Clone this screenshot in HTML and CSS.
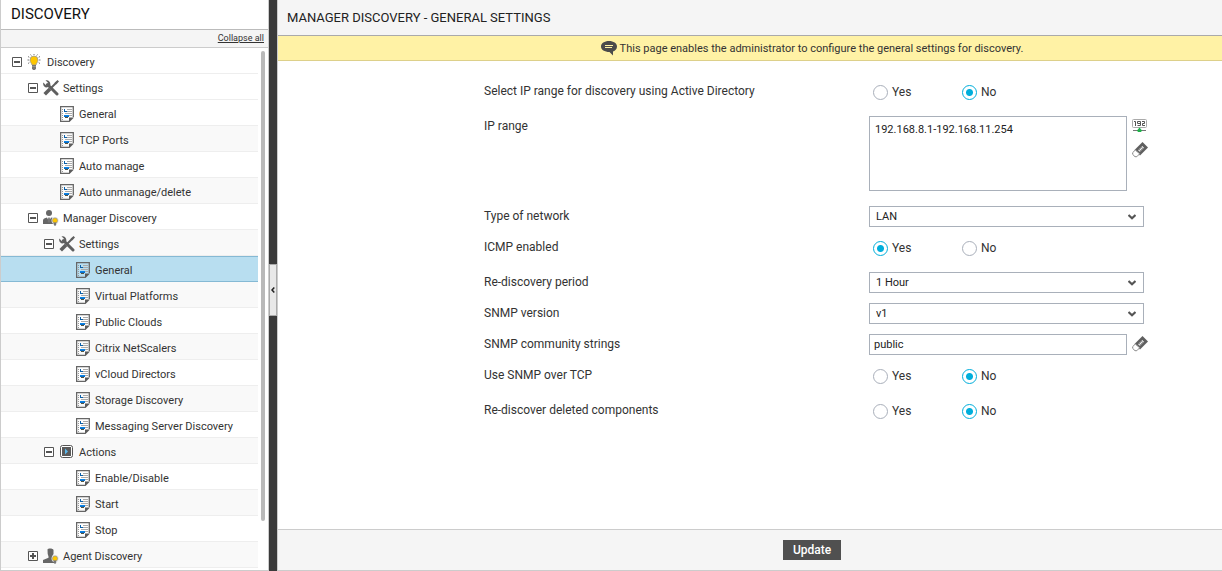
FILE: index.html
```html
<!DOCTYPE html>
<html lang="en">
<head>
    <meta charset="UTF-8">
    <meta name="viewport" content="width=device-width, initial-scale=1.0">
    <title>Manager Discovery - General Settings</title>
    <link rel="stylesheet" href="styles.css">
</head>
<body>
    <svg class="sprite" aria-hidden="true">
        <symbol id="minus" viewBox="0 0 10 10">
            <path d="M.5.5h9v9h-9z" fill="#fff" stroke="#555"/>
            <path d="M2 4h6v2H2z" fill="#555"/>
        </symbol>
        <symbol id="plus" viewBox="0 0 10 10">
            <path d="M.5.5h9v9h-9z" fill="#fff" stroke="#555"/>
            <path d="M2 4h6v2H2zM4 2h2v6H4z" fill="#555"/>
        </symbol>
        <symbol id="bulb" viewBox="0 0 16 16">
            <path d="M7 2a4 4 0 0 0-4 4c0 2 1.500 3 2 5h4c.5-2 2-3 2-5a4 4 0 0 0-4-4z" fill="#fdc600" stroke="#999" stroke-width=".8"/>
            <path d="M5 11h4v3.500L8 16H6l-1-1.500z" fill="#777"/>
            <path d="M5 12.500h4" stroke="#aaa" stroke-width=".6"/>
            <path d="M7 0v1M3.500.5l.8 1M10.500.5l-.8 1M1 2.500l1.300.8M13 2.500l-1.300.8M.5 6h1.500M13.500 6H12M1 9.500l1.300-.8M13 9.500l-1.300-.8" stroke="#777"/>
        </symbol>
        <symbol id="tools" viewBox="0 0 16 16">
            <path d="M4.500 4.500L14 14" stroke="#5f5f5f" stroke-width="3" stroke-linecap="round" fill="none"/>
            <path d="M2.500.3L5.200 3 4.800 4.800 3 5.300.3 2.600C-.4 5.300 1.500 8 4.600 7.300L7.300 5C7.800 2 5.500-.5 2.500.3z" fill="#5f5f5f"/>
            <path d="M1.700 14.300L7 9" stroke="#5f5f5f" stroke-width="3.600"/>
            <path d="M7 9L14 2" stroke="#5f5f5f" stroke-width="2"/>
            <path d="M11.500 3L14.500 0 16 1.500 13 4.500z" fill="#5f5f5f"/>
        </symbol>
        <symbol id="page" viewBox="0 0 16 16">
            <path d="M13.300 11V.6H.6v14.800H9" fill="none" stroke="#666" stroke-width="1.300"/>
            <path d="M9 11.500h5L9.500 16H9z" fill="#5c5c5c"/>
            <path d="M2 3.500h1M2 5.500h1M2 7.500h1M2 9.500h1M2 11.500h1M2 13.500h1" stroke="#999"/>
            <path d="M7 3.500h5M7 5.500h5M5 7.500h7M9 9.500h3" stroke="#aaa"/>
            <path d="M4 3h1v2h2v1H4z" fill="#0b5fa8"/>
            <path d="M4 9h5v1H4z" fill="#0a84e8"/>
            <path d="M4 10h5v1H4z" fill="#0a6cc4"/>
            <path d="M5 11h3v1H5z" fill="#555540"/>
        </symbol>
        <symbol id="manager" viewBox="0 0 16 16">
            <circle cx="6" cy="3" r="3" fill="#666"/>
            <path d="M0 14v-3.500C0 8.500 2 8 4 7.500l2 4 2-4c1.500.3 3 .7 3.500 2V14z" fill="#666"/>
            <path d="M5.300 7.500h1.400l.6 4L6 13l-1.300-1.500z" fill="#777"/>
            <circle cx="12" cy="10.500" r="3.500" fill="#ddd"/>
            <circle cx="12" cy="10.500" r="2.500" fill="#fdc600" stroke="#888" stroke-width=".5"/>
            <path d="M10.800 12.500h2.400V15L12 16l-1.200-1z" fill="#777"/>
        </symbol>
        <symbol id="agent" viewBox="0 0 16 16">
            <path d="M4.500 1.500C5 0 10 0 10.500 2v4L9 8.500v1.200l3.500 1.800V15H0v-3l5.500-2.300V8.500L4.700 6z" fill="#666"/>
            <circle cx="12" cy="10.500" r="3.500" fill="#ddd"/>
            <circle cx="12" cy="10.500" r="2.500" fill="#fdc600" stroke="#888" stroke-width=".5"/>
            <path d="M10.800 12.500h2.400V15L12 16l-1.200-1z" fill="#777"/>
        </symbol>
        <symbol id="action" viewBox="0 0 16 16">
            <rect x="1.500" y="1.500" width="12" height="12" rx="2" fill="#fff" stroke="#555"/>
            <path d="M3 3h9v9H3z" fill="#5a5a5a"/>
            <path d="M6 4.500l3 3-3 3z" fill="#5bb8ec"/>
        </symbol>
        <symbol id="eraser" viewBox="0 0 16 16">
            <path d="M10.500 0L16 5.500 8 13.500 2.500 8z" fill="#5f5f5f"/>
            <path d="M3.300 8L.7 10.600v1.800L3 14.700h1.800l2.900-2.900z" fill="#fff" stroke="#888"/>
            <path d="M7 9l4.500-4.500" stroke="#fff" stroke-width="2.400" stroke-dasharray="1 .6"/>
        </symbol>
        <symbol id="chevron" viewBox="0 0 8 6">
            <path d="M.5 1L4 4.200 7.500 1" fill="none" stroke="#555" stroke-width="2.200"/>
        </symbol>
    </svg>

    <aside class="sidebar">
        <h2>DISCOVERY</h2>
        <div class="collapse"><a href="#">Collapse all</a></div>
        <ul class="tree">
            <li><svg class="toggle"><use href="#minus"/></svg><svg class="icon"><use href="#bulb"/></svg><span>Discovery</span></li>
            <li class="level1"><svg class="toggle"><use href="#minus"/></svg><svg class="icon"><use href="#tools"/></svg><span>Settings</span></li>
            <li class="leaf2"><svg class="icon"><use href="#page"/></svg><a href="#">General</a></li>
            <li class="leaf2"><svg class="icon"><use href="#page"/></svg><a href="#">TCP Ports</a></li>
            <li class="leaf2"><svg class="icon"><use href="#page"/></svg><a href="#">Auto manage</a></li>
            <li class="leaf2"><svg class="icon"><use href="#page"/></svg><a href="#">Auto unmanage/delete</a></li>
            <li class="level1"><svg class="toggle"><use href="#minus"/></svg><svg class="icon"><use href="#manager"/></svg><span>Manager Discovery</span></li>
            <li class="level2"><svg class="toggle"><use href="#minus"/></svg><svg class="icon"><use href="#tools"/></svg><span>Settings</span></li>
            <li class="leaf3 selected"><svg class="icon"><use href="#page"/></svg><a href="#">General</a></li>
            <li class="leaf3"><svg class="icon"><use href="#page"/></svg><a href="#">Virtual Platforms</a></li>
            <li class="leaf3"><svg class="icon"><use href="#page"/></svg><a href="#">Public Clouds</a></li>
            <li class="leaf3"><svg class="icon"><use href="#page"/></svg><a href="#">Citrix NetScalers</a></li>
            <li class="leaf3"><svg class="icon"><use href="#page"/></svg><a href="#">vCloud Directors</a></li>
            <li class="leaf3"><svg class="icon"><use href="#page"/></svg><a href="#">Storage Discovery</a></li>
            <li class="leaf3"><svg class="icon"><use href="#page"/></svg><a href="#">Messaging Server Discovery</a></li>
            <li class="level2"><svg class="toggle"><use href="#minus"/></svg><svg class="icon"><use href="#action"/></svg><span>Actions</span></li>
            <li class="leaf3"><svg class="icon"><use href="#page"/></svg><a href="#">Enable/Disable</a></li>
            <li class="leaf3"><svg class="icon"><use href="#page"/></svg><a href="#">Start</a></li>
            <li class="leaf3"><svg class="icon"><use href="#page"/></svg><a href="#">Stop</a></li>
            <li class="level1"><svg class="toggle"><use href="#plus"/></svg><svg class="icon"><use href="#agent"/></svg><span>Agent Discovery</span></li>
        </ul>
        <div class="scrollbar"></div>
    </aside>

    <div class="splitter">
        <button type="button" class="handle" aria-label="Hide tree">
            <svg viewBox="0 0 4 6"><path d="M3.300.5L1 3l2.300 2.500" fill="none" stroke="#222" stroke-width="1.500"/></svg>
        </button>
    </div>

    <main>
        <h1>MANAGER DISCOVERY - GENERAL SETTINGS</h1>
        <p class="message">
            <svg viewBox="0 0 16 16"><path d="M8 1c4.500 0 8 2.300 8 5.500 0 2.500-1.500 4-4 5V15.500L8.500 12C3.500 12 0 9.700 0 6.500S3.500 1 8 1z" fill="#4b4b4b"/><path d="M4 5.500h8M4 7.500h7" stroke="#fff2a5"/></svg>
            This page enables the administrator to configure the general settings for discovery.
        </p>
        <form id="settings">
            <div class="row radios" role="radiogroup" aria-labelledby="adLabel">
                <span class="name" id="adLabel">Select IP range for discovery using Active Directory</span>
                <div class="field">
                    <label><input type="radio" name="ad">Yes</label>
                    <label><input type="radio" name="ad" checked>No</label>
                </div>
            </div>
            <div class="row range">
                <label class="name" for="ipRange">IP range</label>
                <div class="field">
                    <textarea id="ipRange">192.168.8.1-192.168.11.254</textarea>
                    <div class="tools">
                        <button type="button" aria-label="Add IP range">
                            <svg viewBox="0 0 16 16"><rect x=".5" y="1.500" width="14" height="8" rx="1" fill="#fff" stroke="#aaa"/><path d="M2 3.500h1.500V8M5.500 7.500h3v-4h-3v2h3M10 3.500h2.500v2H10.500v2H13" fill="none" stroke="#555"/><path d="M1 12.500h13" stroke="#777"/><path d="M7.500 9.500l2.500 3-1 1.500H6l-1-1.500z" fill="#1fb24a"/></svg>
                        </button>
                        <button type="button" aria-label="Clear IP range"><svg><use href="#eraser"/></svg></button>
                    </div>
                </div>
            </div>
            <div class="row">
                <label class="name" for="network">Type of network</label>
                <div class="field select">
                    <select id="network"><option>LAN</option></select>
                    <svg><use href="#chevron"/></svg>
                </div>
            </div>
            <div class="row radios" role="radiogroup" aria-labelledby="icmpLabel">
                <span class="name" id="icmpLabel">ICMP enabled</span>
                <div class="field">
                    <label><input type="radio" name="icmp" checked>Yes</label>
                    <label><input type="radio" name="icmp">No</label>
                </div>
            </div>
            <div class="row">
                <label class="name" for="period">Re-discovery period</label>
                <div class="field select">
                    <select id="period"><option>1 Hour</option></select>
                    <svg><use href="#chevron"/></svg>
                </div>
            </div>
            <div class="row">
                <label class="name" for="version">SNMP version</label>
                <div class="field select">
                    <select id="version"><option>v1</option></select>
                    <svg><use href="#chevron"/></svg>
                </div>
            </div>
            <div class="row text">
                <label class="name" for="community">SNMP community strings</label>
                <div class="field">
                    <input id="community" type="text" value="public">
                    <div class="tools">
                        <button type="button" aria-label="Clear community strings"><svg><use href="#eraser"/></svg></button>
                    </div>
                </div>
            </div>
            <div class="row radios" role="radiogroup" aria-labelledby="tcpLabel">
                <span class="name" id="tcpLabel">Use SNMP over TCP</span>
                <div class="field">
                    <label><input type="radio" name="tcp">Yes</label>
                    <label><input type="radio" name="tcp" checked>No</label>
                </div>
            </div>
            <div class="row radios" role="radiogroup" aria-labelledby="deletedLabel">
                <span class="name" id="deletedLabel">Re-discover deleted components</span>
                <div class="field">
                    <label><input type="radio" name="deleted">Yes</label>
                    <label><input type="radio" name="deleted" checked>No</label>
                </div>
            </div>
        </form>
        <footer>
            <button type="submit" form="settings" class="update">Update</button>
        </footer>
    </main>
</body>
</html>
```
FILE: styles.css
```css
*{
    padding: 0;
    margin: 0;
    box-sizing: border-box;
}
body{
    height: 100vh;
    display: flex;
    font-family: Roboto, sans-serif;
    font-size: 12px;
    color: #333;
    background-color: #fff;
    overflow: hidden;
}
svg{
    display: block;
    flex: none;
    width: 16px;
    height: 16px;
}
.sprite{
    position: absolute;
    width: 0;
    height: 0;
}
button{
    border: none;
    background: none;
    font-family: inherit;
    cursor: pointer;
}

/* tree */
.sidebar{
    position: relative;
    flex: none;
    width: 269px;
    border: 1px solid #ccc;
    border-top: none;
}
.sidebar h2{
    padding-left: 10px;
    font-size: 15px;
    font-weight: 400;
    line-height: 29px;
    color: #111;
    border-bottom: 1px solid #bbb;
}
.collapse{
    height: 18px;
    padding-right: 4px;
    text-align: right;
    font-size: 9px;
    line-height: 16px;
    background-color: #f5f5f5;
    border-bottom: 1px solid #ccc;
}
.collapse a{
    color: #333;
}
.tree{
    list-style: none;
    margin-right: 10px;
    font-size: 11px;
}
.tree li{
    display: flex;
    align-items: center;
    height: 26px;
    padding-top: 3px;
    padding-left: 11px;
    border-bottom: 1px solid #eee;
}
.tree li:nth-child(2n+4){
    background-color: #f9f9f9;
}
.tree .level1{
    padding-left: 27px;
}
.tree .level2{
    padding-left: 43px;
}
.tree .leaf2{
    padding-left: 59px;
}
.tree .leaf3{
    padding-left: 75px;
}
.tree .selected{
    padding-top: 2px;
    background-color: #b8def0;
    border-top: 1px solid #85b9d4;
    border-bottom-color: #85b9d4;
}
.tree a{
    color: inherit;
    text-decoration: none;
}
.toggle{
    width: 10px;
    height: 10px;
    margin-right: 5px;
}
.icon{
    margin-right: 4px;
}
.leaf2 .icon, .leaf3 .icon{
    margin-right: 3px;
}
.scrollbar{
    position: absolute;
    top: 51px;
    right: 3px;
    width: 4px;
    height: 470px;
    border-radius: 2px;
    background-color: #b9b9b9;
}
.splitter{
    flex: none;
    width: 8px;
    display: flex;
    align-items: center;
    padding-top: 8px;
    background-color: #3a3a3a;
}
.handle{
    width: 8px;
    height: 52px;
    display: flex;
    align-items: center;
    justify-content: center;
    background-color: #e8e8e8;
    border: 1px solid #aaa;
}
.handle svg{
    width: 4px;
    height: 6px;
}

/* settings */
main{
    flex: 1;
    display: flex;
    flex-direction: column;
    border-left: 1px solid #ccc;
    border-bottom: 1px solid #ccc;
}
h1{
    padding-left: 9px;
    font-size: 13px;
    font-weight: 400;
    line-height: 35px;
    color: #222;
    background-color: #f5f5f5;
    border-bottom: 1px solid #aaa;
}
.message{
    display: flex;
    align-items: center;
    justify-content: center;
    gap: 3px;
    height: 25px;
    padding-left: 124px;
    font-size: 11px;
    background-color: #fff2a5;
    border-bottom: 1px solid #ddd08a;
}
form{
    flex: 1;
    padding-top: 20px;
}
.row{
    display: grid;
    grid-template-columns: 206fr 385fr 353fr;
    align-items: start;
    margin-bottom: 10px;
}
.name{
    grid-column: 2;
    line-height: 21px;
}
.field{
    display: flex;
}
.radios{
    margin-bottom: 13px;
}
.radios .name, .range .name, .text .name{
    line-height: 20px;
}
.radios label{
    display: flex;
    align-items: center;
    gap: 4px;
    width: 89px;
    height: 22px;
    padding-left: 4px;
}
input[type="radio"]{
    appearance: none;
    width: 15px;
    height: 15px;
    border: 1px solid #a9afba;
    border-radius: 50%;
}
input[type="radio"]:checked{
    border-color: #00aedb;
    background: radial-gradient(circle, #00aedb 3px, #fff 4px);
}
.range{
    margin-bottom: 15px;
}
textarea, select, input[type="text"]{
    font-family: inherit;
    color: #222;
    background-color: #fff;
    border: 1px solid #a9b0ba;
    border-radius: 0;
}
textarea{
    width: 258px;
    height: 75px;
    padding: 5px;
    font-size: 11px;
    line-height: 15px;
    resize: none;
}
input[type="text"]{
    width: 258px;
    height: 21px;
    padding: 0 4px;
    font-size: 11px;
}
.select{
    position: relative;
    width: 275px;
}
select{
    appearance: none;
    width: 100%;
    height: 21px;
    padding: 0 6px;
    font-size: 11px;
}
.select svg{
    position: absolute;
    right: 8px;
    top: 8px;
    width: 8px;
    height: 6px;
    pointer-events: none;
}
.tools{
    display: flex;
    flex-direction: column;
    gap: 8px;
    padding: 2px 5px;
}
footer{
    height: 41px;
    display: flex;
    align-items: center;
    justify-content: center;
    padding-left: 124px;
    background-color: #f5f5f5;
    border-top: 1px solid #ccc;
}
.update{
    height: 20px;
    padding: 0 10px;
    font-size: 12px;
    font-weight: 500;
    color: #fff;
    background-color: #505050;
}
```
